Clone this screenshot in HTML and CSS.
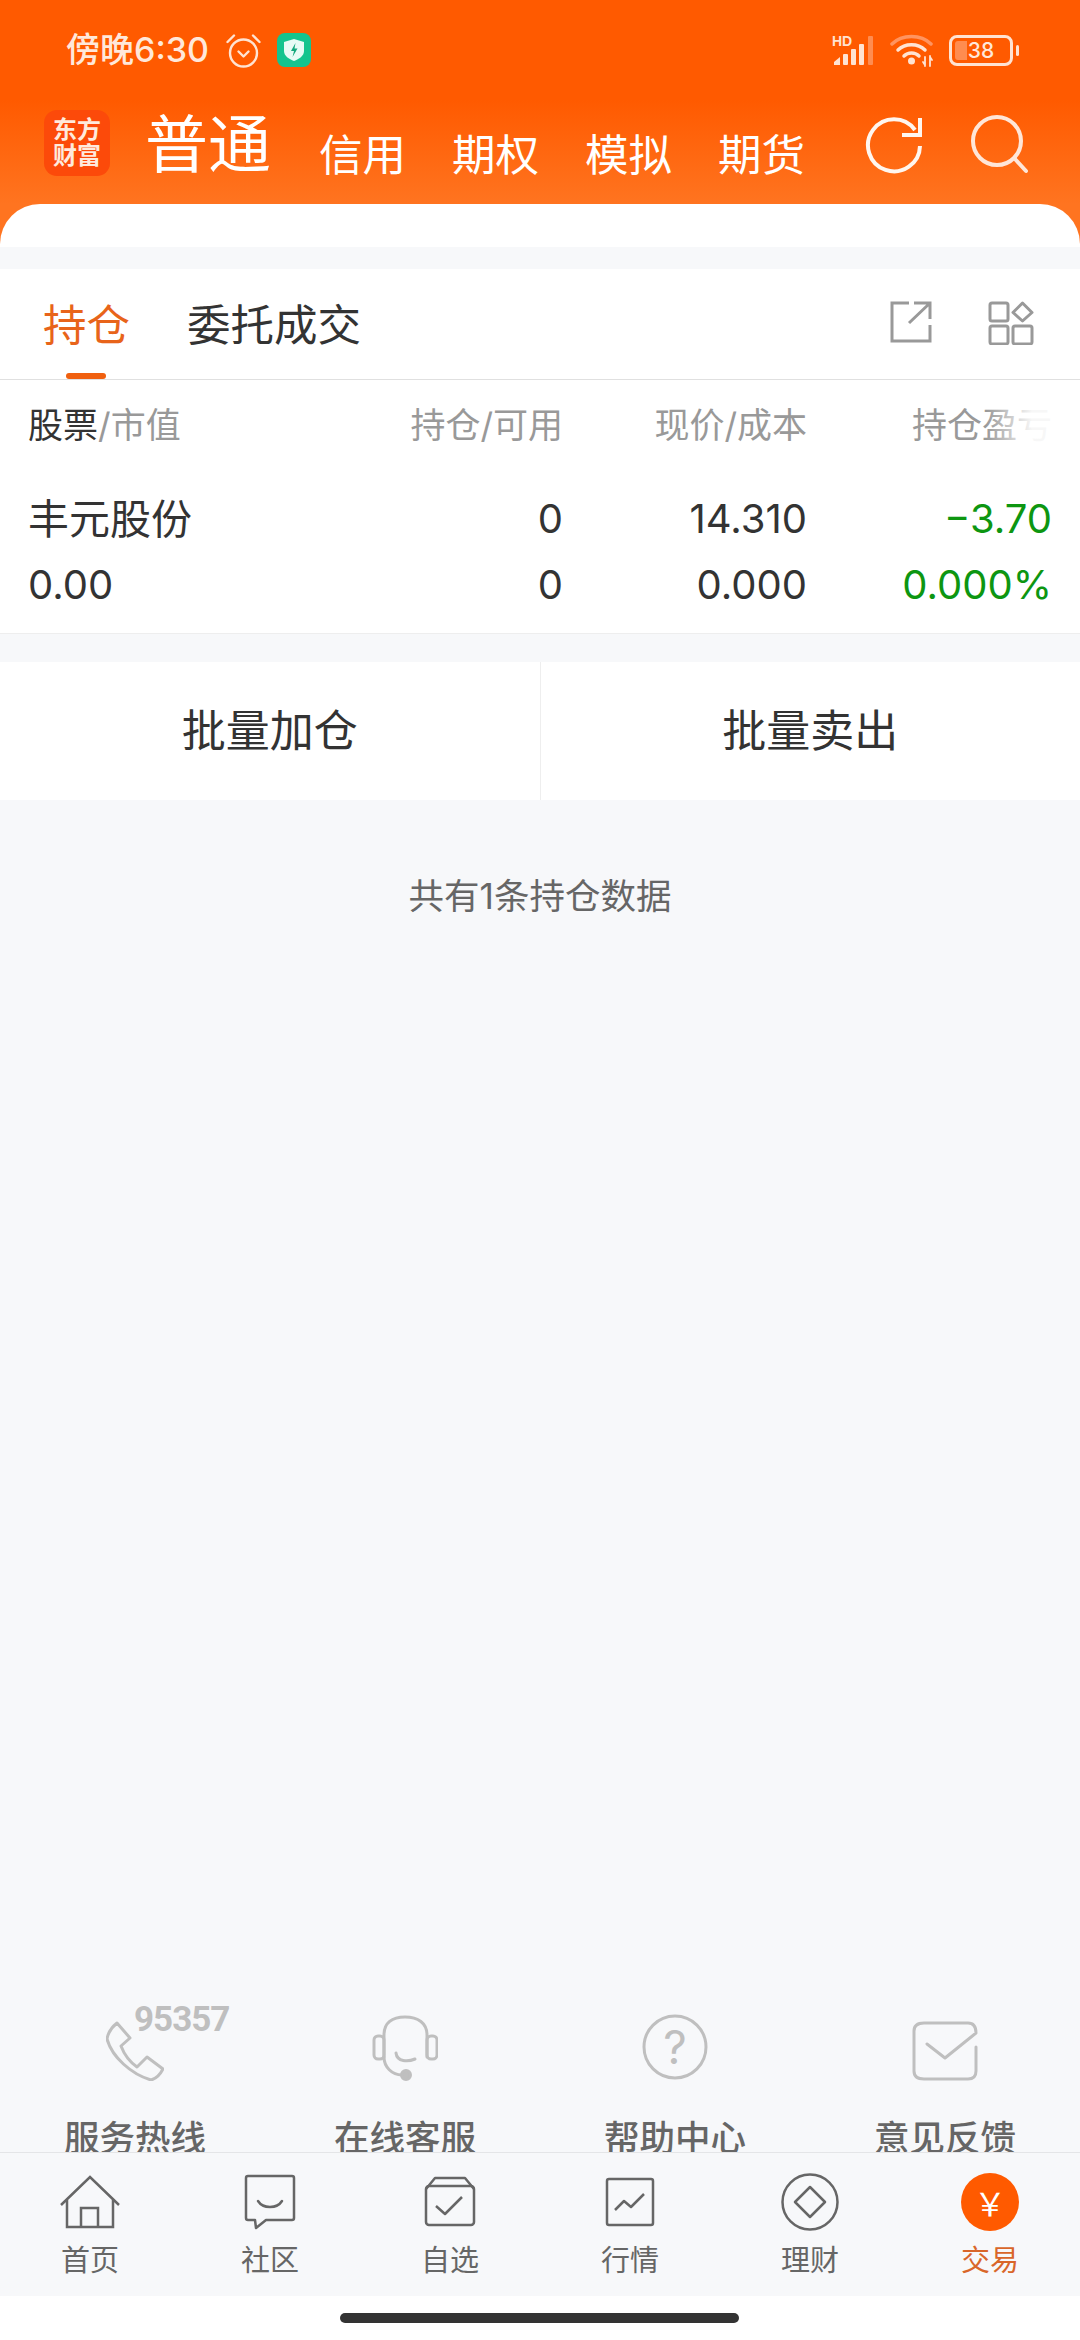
FILE: index.html
```html
<!DOCTYPE html>
<html lang="zh-CN">
<head>
    <meta charset="UTF-8">
    <title>交易</title>
    <link rel="stylesheet" href="styles.css">
</head>
<body>
    <div id="wrapper">
        <div class="head">
            <div class="status">
                <span class="time">傍晚6:30</span>
                <svg class="alarm" width="35" height="35" viewBox="0 0 35 35" fill="none" stroke="#ffe3d2" stroke-width="2.4" stroke-linecap="round" stroke-linejoin="round">
                    <circle cx="17.5" cy="20" r="13.5"/>
                    <path d="M1.5 9 8 2.5M33.5 9 27 2.5"/>
                    <path d="M12.5 18.5l5 5 5-5"/>
                </svg>
                <svg class="guard" width="34" height="34" viewBox="0 0 34 34">
                    <rect width="34" height="34" rx="8" fill="#14c48e"/>
                    <path d="M17 6l10 3v9c0 5-5 8-10 10-5-2-10-5-10-10V9z" fill="#e8fbf5"/>
                    <path d="M18.5 10l-4.5 8h3l-1.500 6 5-8.500h-3z" fill="#14a87c"/>
                </svg>
                <div class="status-right">
                    <svg width="42" height="32" viewBox="0 0 42 32">
                        <text x="0" y="12" class="hd">HD</text>
                        <path d="M2 31v-3l6-5v8z" fill="#ffe3d2"/>
                        <rect x="11" y="20" width="5" height="11" rx="1" fill="#ffe3d2"/>
                        <rect x="19" y="15" width="5" height="16" rx="1" fill="#ffe3d2"/>
                        <rect x="27" y="10" width="5" height="21" rx="1" fill="#ffe3d2"/>
                        <rect x="36" y="2" width="5" height="29" rx="1" fill="#ff8c50"/>
                    </svg>
                    <svg class="wifi" width="44" height="34" viewBox="0 0 44 34" fill="none" stroke-linecap="round">
                        <path d="M2 11C12 1 31 1 41 11" stroke="#ff9460" stroke-width="3.500"/>
                        <path d="M8 17C15 10 28 10 35 17" stroke="#ffe3d2" stroke-width="3.500"/>
                        <path d="M14 23C18 19 25 19 29 23" stroke="#ffe3d2" stroke-width="3.500"/>
                        <circle cx="21.500" cy="28" r="3.500" fill="#ffe3d2"/>
                        <path d="M35 24v9M40 33v-10M33 29l2 3M42 27l-2-3" stroke="#ffe3d2" stroke-width="1.800"/>
                    </svg>
                    <div class="battery">
                        <div class="battery-fill"></div>
                        <span>38</span>
                    </div>
                    <div class="battery-nub"></div>
                </div>
            </div>
            <div class="nav">
                <div class="logo"><span>东方</span><span>财富</span></div>
                <div class="nav-on">普通</div>
                <div class="nav-list">
                    <span>信用</span>
                    <span>期权</span>
                    <span>模拟</span>
                    <span>期货</span>
                </div>
                <div class="nav-icons">
                    <svg width="58" height="58" viewBox="0 0 58 58" fill="none" stroke="#fff6ef" stroke-width="4">
                        <path d="M55 30A26 26 0 1 1 50 14"/>
                        <path d="M55 2V19H37"/>
                    </svg>
                    <svg width="58" height="60" viewBox="0 0 58 60" fill="none" stroke="#ffe6d8" stroke-width="4" stroke-linecap="round">
                        <circle cx="27" cy="27" r="24"/>
                        <path d="M45 45 56 57"/>
                    </svg>
                </div>
            </div>
            <div class="card-top"></div>
        </div>

        <div class="tabs">
            <div class="tab on">持仓</div>
            <div class="tab">委托成交</div>
            <div class="tab-icons">
                <svg width="42" height="42" viewBox="0 0 42 42" fill="none" stroke="#999" stroke-width="3">
                    <path d="M19 2H2V40H40V24"/>
                    <path d="M19 22 40 2M24 2H40V18"/>
                </svg>
                <svg width="46" height="44" viewBox="0 0 46 44" fill="none" stroke="#999" stroke-width="3" stroke-linejoin="round">
                    <rect x="2" y="2" width="18" height="18" rx="2"/>
                    <rect x="2" y="25" width="18" height="18" rx="2"/>
                    <rect x="25" y="25" width="19" height="18" rx="2"/>
                    <path d="M34.500 2 44 11.500 34.500 20 25 11.500z"/>
                </svg>
            </div>
        </div>

        <div class="table">
            <div class="grid grid-head">
                <div class="left"><span class="dark">股票</span>/市值</div>
                <div>持仓/可用</div>
                <div>现价/成本</div>
                <div class="last">持仓盈亏<i class="fade"></i></div>
            </div>
            <div class="grid grid-row">
                <div class="left name">丰元股份</div>
                <div>0</div>
                <div>14.310</div>
                <div class="green">−3.70</div>
                <div class="left">0.00</div>
                <div>0</div>
                <div>0.000</div>
                <div class="green">0.000%</div>
            </div>
        </div>

        <div class="btns">
            <div class="btn">批量加仓</div>
            <div class="btn">批量卖出</div>
        </div>

        <div class="main">
            <div class="tip">共有1条持仓数据</div>
            <div class="services">
                <div class="service">
                    <div class="service-icon">
                        <svg width="58" height="60" viewBox="0 0 58 60" fill="none" stroke="#bfbfbf" stroke-width="3" stroke-linejoin="round">
                            <path d="M11 2 24 17 15 25C18 33 24 41 31 46L41 36 57 48C54 54 49 58 45 59 25 53 6 36 1 18 2 12 6 6 11 2Z"/>
                        </svg>
                        <span class="hotline">95357</span>
                    </div>
                    <div class="service-name">服务热线</div>
                </div>
                <div class="service">
                    <div class="service-icon">
                        <svg width="66" height="66" viewBox="0 0 66 66" fill="none" stroke="#bfbfbf" stroke-width="3" stroke-linecap="round">
                            <path d="M12 42V20C12 8 20 2 33 2S55 8 55 20V42"/>
                            <rect x="2" y="21" width="10" height="23" rx="4"/>
                            <rect x="55" y="21" width="10" height="23" rx="4"/>
                            <path d="M12 42C12 52 20 60 30 60"/>
                            <path d="M24 38C25 47 36 47 43 44"/>
                            <circle cx="34" cy="60" r="4.500" fill="#bfbfbf"/>
                        </svg>
                    </div>
                    <div class="service-name">在线客服</div>
                </div>
                <div class="service">
                    <div class="service-icon">
                        <svg width="66" height="68" viewBox="0 0 66 68" fill="none" stroke="#bfbfbf" stroke-width="3">
                            <circle cx="33" cy="34" r="31"/>
                            <text x="33" y="51" class="ask">?</text>
                        </svg>
                    </div>
                    <div class="service-name">帮助中心</div>
                </div>
                <div class="service">
                    <div class="service-icon">
                        <svg width="66" height="60" viewBox="0 0 66 60" fill="none" stroke="#bfbfbf" stroke-width="3" stroke-linecap="round" stroke-linejoin="round">
                            <path d="M64 26V50Q64 58 56 58H12Q2 58 2 50V10Q2 2 12 2H56Q64 2 64 12L33 37 15 23"/>
                        </svg>
                    </div>
                    <div class="service-name">意见反馈</div>
                </div>
            </div>
        </div>

        <div class="foot">
            <div class="foot-item">
                <div class="foot-icon">
                    <svg width="60" height="54" viewBox="0 0 60 54" fill="none" stroke="#666" stroke-width="2.500">
                        <path d="M1 30 30 2 59 30"/>
                        <path d="M7 25V52H53V25"/>
                        <path d="M21 52V33H38V52"/>
                    </svg>
                </div>
                <span>首页</span>
            </div>
            <div class="foot-item">
                <div class="foot-icon">
                    <svg width="52" height="56" viewBox="0 0 52 56" fill="none" stroke="#666" stroke-width="2.500" stroke-linejoin="round">
                        <path d="M4 2H48Q50 2 50 4V44Q50 46 48 46H22L12 54 11 46H4Q2 46 2 44V4Q2 2 4 2Z"/>
                        <path d="M14 27C19 35 33 35 38 27" stroke-linecap="round"/>
                    </svg>
                </div>
                <span>社区</span>
            </div>
            <div class="foot-item">
                <div class="foot-icon">
                    <svg width="52" height="52" viewBox="0 0 52 52" fill="none" stroke="#666" stroke-width="2.500" stroke-linejoin="round">
                        <rect x="2" y="10" width="48" height="39" rx="3"/>
                        <path d="M2 13 11 2H41L50 13"/>
                        <path d="M12 30 21 38 38 21"/>
                    </svg>
                </div>
                <span>自选</span>
            </div>
            <div class="foot-item">
                <div class="foot-icon">
                    <svg width="50" height="50" viewBox="0 0 50 50" fill="none" stroke="#666" stroke-width="2.500" stroke-linejoin="round">
                        <rect x="2" y="2" width="46" height="46" rx="2"/>
                        <path d="M10 33 19 24 26 30 39 17"/>
                    </svg>
                </div>
                <span>行情</span>
            </div>
            <div class="foot-item">
                <div class="foot-icon">
                    <svg width="58" height="58" viewBox="0 0 58 58" fill="none" stroke="#666" stroke-width="2.500" stroke-linejoin="round">
                        <circle cx="29" cy="29" r="27.500"/>
                        <path d="M29 14 44 29 29 44 14 29Z"/>
                    </svg>
                </div>
                <span>理财</span>
            </div>
            <div class="foot-item on">
                <div class="foot-icon">
                    <div class="coin">￥</div>
                </div>
                <span>交易</span>
            </div>
        </div>

        <div class="home-zone"><div class="home-bar"></div></div>
    </div>
</body>
</html>
```

FILE: styles.css
```css
*{
    padding: 0;
    margin: 0;
    box-sizing: border-box;
}
body{
    font-family: Inter, "Noto Sans CJK SC", sans-serif;
    color: #333;
    background: #f7f8fa;
}
#wrapper{
    display: flex;
    flex-direction: column;
    width: 1080px;
    height: 2340px;
    overflow: hidden;
}

/* orange head */
.head{
    flex: none;
    height: 247px;
    display: flex;
    flex-direction: column;
    background: linear-gradient(#ff5a00 0, #ff5a00 100px, #ff7420 204px);
}
.status{
    height: 100px;
    display: flex;
    align-items: center;
    padding-left: 66px;
    color: #ffe8da;
}
.time{
    font-size: 34px;
    font-weight: 500;
    line-height: 1;
}
.alarm{
    margin-left: 17px;
}
.guard{
    margin-left: 16px;
}
.status-right{
    display: flex;
    align-items: center;
    margin-left: auto;
    padding-right: 61px;
}
.hd{
    font-family: "Liberation Sans", sans-serif;
    font-size: 14px;
    font-weight: 700;
    fill: #ffe3d2;
}
.wifi{
    margin-left: 16px;
}
.battery{
    position: relative;
    width: 64px;
    height: 31px;
    margin-left: 15px;
    border: 3px solid #ffe3d2;
    border-radius: 8px;
    text-align: center;
    font-size: 21px;
    font-weight: 500;
    line-height: 25px;
}
.battery span{
    position: relative;
}
.battery-fill{
    position: absolute;
    left: 3px;
    top: 3px;
    bottom: 3px;
    width: 12px;
    background: #ff8c50;
    border-radius: 3px 0 0 3px;
}
.battery-nub{
    width: 3px;
    height: 11px;
    margin-left: 3px;
    background: #ffe3d2;
    border-radius: 2px;
}

.nav{
    height: 104px;
    display: flex;
    align-items: flex-end;
    padding: 0 52px 28px 44px;
    color: #fff;
}
.logo{
    width: 66px;
    height: 66px;
    display: flex;
    flex-direction: column;
    align-items: center;
    justify-content: center;
    background: #fc4a0a;
    border-radius: 13px;
    color: #ffeadd;
    font-size: 24px;
    font-weight: 700;
    line-height: 26px;
}
.nav-on{
    margin-left: 35px;
    font-size: 63px;
    line-height: 1;
}
.nav-list{
    display: flex;
    gap: 46px;
    margin-left: 48px;
    margin-bottom: -1px;
    font-size: 43.5px;
    line-height: 1;
}
.nav-icons{
    display: flex;
    align-items: flex-end;
    gap: 47px;
    margin-left: auto;
    margin-bottom: 2px;
}
.card-top{
    height: 43px;
    background: #fff;
    border-radius: 40px 40px 0 0;
}

/* tabs */
.tabs{
    flex: none;
    height: 111px;
    margin-top: 22px;
    display: flex;
    align-items: center;
    gap: 57px;
    padding: 0 46px 0 43px;
    background: #fff;
    border-bottom: 1px solid #e0e0e0;
}
.tab{
    position: relative;
    height: 111px;
    font-size: 43.5px;
    line-height: 113px;
}
.tab.on{
    color: #e8641a;
}
.tab.on:after{
    content: "";
    position: absolute;
    left: 23px;
    width: 40px;
    bottom: 1px;
    height: 6px;
    background: #f0600f;
    border-radius: 3px;
}
.tab-icons{
    display: flex;
    gap: 56px;
    margin-left: auto;
    margin-bottom: 2px;
}

/* table */
.table{
    flex: none;
    height: 254px;
    background: #fff;
    border-bottom: 1px solid #eee;
}
.grid{
    display: grid;
    grid-template-columns: 303px 232px 244px 245px;
    padding: 0 27px 0 28px;
    text-align: right;
}
.grid .left{
    text-align: left;
}
.grid-head{
    height: 90px;
    font-size: 35px;
    line-height: 90px;
    color: #999;
}
.dark{
    color: #333;
}
.last{
    position: relative;
}
.fade{
    position: absolute;
    right: 0;
    top: 0;
    bottom: 0;
    width: 66px;
    background: linear-gradient(to right, rgba(255,255,255,0), rgba(255,255,255,.92) 70%);
}
.grid-row{
    padding-top: 16px;
    font-size: 40px;
    line-height: 66px;
}
.name{
    font-size: 41px;
}
.green{
    color: #0d9611;
}

/* buttons */
.btns{
    flex: none;
    height: 138px;
    margin-top: 28px;
    display: flex;
    background: #fff;
}
.btn{
    flex: 1;
    text-align: center;
    font-size: 44px;
    line-height: 138px;
}
.btn + .btn{
    border-left: 1px solid #eee;
}

/* main */
.main{
    flex: 1;
    min-height: 0;
    display: flex;
    flex-direction: column;
}
.tip{
    height: 194px;
    text-align: center;
    font-size: 35.5px;
    line-height: 194px;
    color: #666;
}
.services{
    height: 161px;
    padding-top: 24px;
    margin-top: auto;
    display: flex;
    overflow: hidden;
}
.service{
    width: 270px;
    text-align: center;
}
.service-icon{
    position: relative;
    height: 66px;
    display: flex;
    align-items: flex-end;
    justify-content: center;
}
.service-icon svg{
    display: block;
}
.hotline{
    position: absolute;
    left: 134px;
    top: -13px;
    font-family: Roboto, sans-serif;
    font-size: 35px;
    font-weight: 700;
    line-height: 36px;
    letter-spacing: -1px;
    color: #bfbfbf;
}
.ask{
    font-size: 46px;
    text-anchor: middle;
    fill: #bfbfbf;
    stroke: none;
}
.service-name{
    margin-top: 38px;
    font-size: 35.5px;
    font-weight: 500;
    line-height: 40px;
    color: #666;
}

/* bottom bar */
.foot{
    flex: none;
    height: 144px;
    display: flex;
    padding-top: 20px;
    border-top: 1px solid #e4e5e7;
    background: #f7f8fa;
}
.foot-item{
    width: 180px;
    display: flex;
    flex-direction: column;
    align-items: center;
    font-size: 29px;
    line-height: 32px;
    color: #666;
}
.foot-item.on{
    color: #d9662a;
}
.foot-icon{
    height: 58px;
    margin-bottom: 14px;
    display: flex;
    align-items: center;
    justify-content: center;
}
.coin{
    width: 58px;
    height: 58px;
    background: #ff5a00;
    border-radius: 50%;
    color: #fff;
    text-align: center;
    font-family: "Noto Sans CJK SC", sans-serif;
    font-size: 32px;
    line-height: 58px;
}
.home-zone{
    flex: none;
    height: 44px;
    padding-top: 17px;
    background: #fff;
}
.home-bar{
    width: 399px;
    height: 10px;
    margin-left: 340px;
    background: #333;
    border-radius: 5px;
}
```
